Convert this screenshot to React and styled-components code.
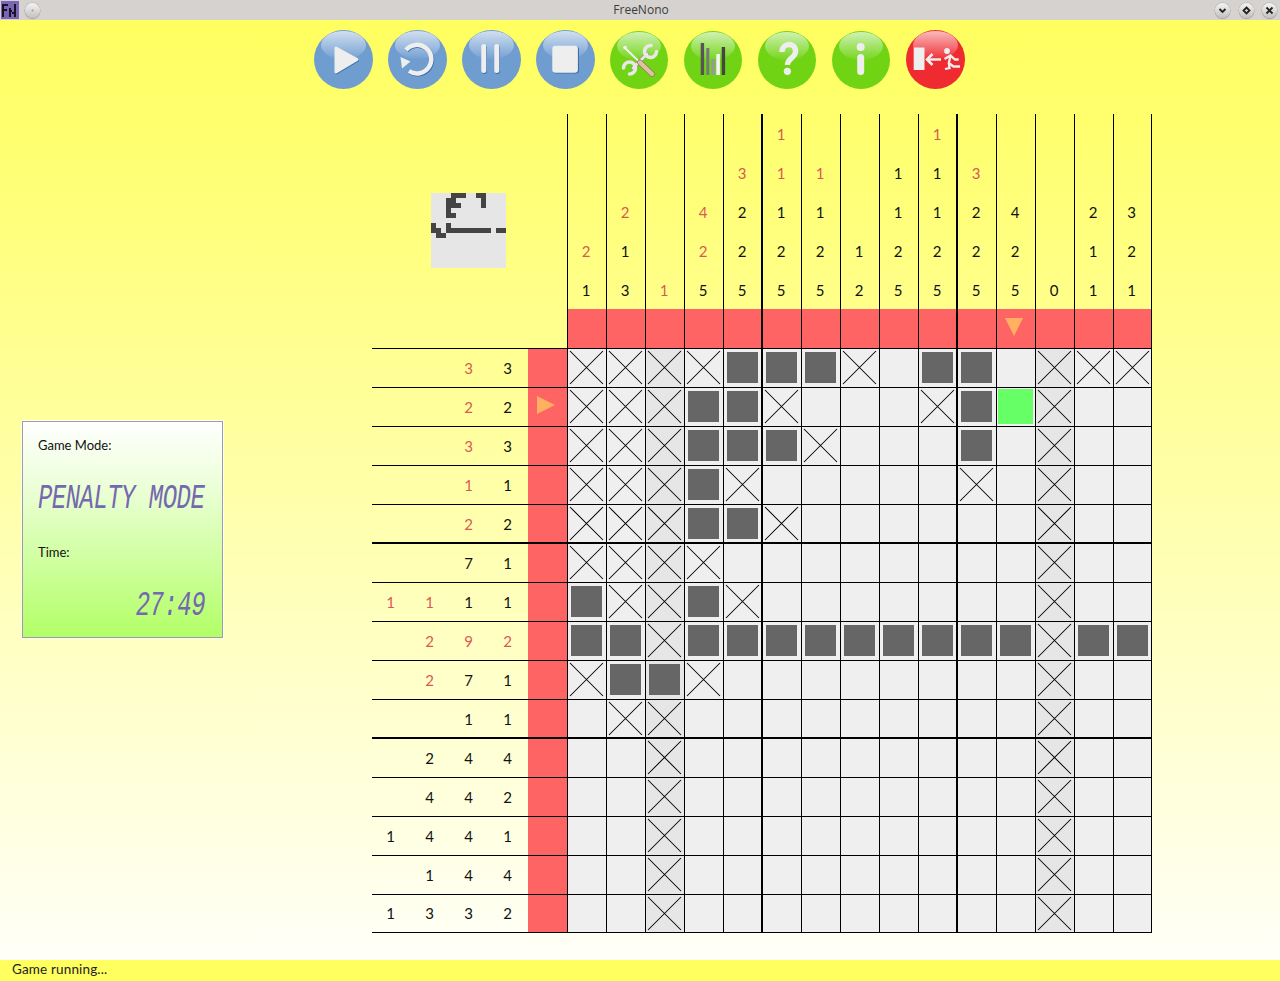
import React from 'react';
import styled, { createGlobalStyle } from 'styled-components';

const Global = createGlobalStyle`
  html, body { margin: 0; padding: 0; height: 100%; }
  #root { height: 100%; }
  body { font-family: Lato, "Open Sans", sans-serif; overflow: hidden; }
`;

const Win = styled.div`
  width: 1280px; height: 981px; display: flex; flex-direction: column;
`;
const TitleBar = styled.header`
  height: 20px; flex: none; background: #d6d2d0; display: flex; align-items: center;
  justify-content: space-between; position: relative; padding: 0 3px 0 1px;
`;
const TitleText = styled.div`
  position: absolute; left: 0; right: 0; top: 3px; text-align: center; padding-left: 2px;
  font: 12px/14px "Open Sans", sans-serif; color: #3c3c3c;
`;
const TitleGroup = styled.div`
  display: flex; align-items: center; gap: ${p => p.$gap}px;
`;
const RoundBtn = styled.span`
  width: 15px; height: 15px; border-radius: 50%; display: flex; align-items: center; justify-content: center;
  background: linear-gradient(#f4f4f4, #c4c0be); box-shadow: 0 0 0 .5px #aaa6a4, 0 1px 1px #a8a4a2;
`;
const Main = styled.main`
  flex: 1; min-height: 0; display: flex; flex-direction: column;
  background: linear-gradient(#ffff60 0%, #ffff7a 20%, #fffff8 100%);
`;
const Toolbar = styled.nav`
  display: flex; justify-content: center; gap: 15px; padding: 10px 1px 0 0; height: 84px; box-sizing: border-box; flex: none;
`;
const Orb = styled.button`
  width: ${p => p.$small ? 58 : 59}px; height: ${p => p.$small ? 58 : 59}px;
  margin: ${p => p.$small ? '1px 1px 0 0' : '0'};
  padding: 0; border: 0; border-radius: 50%; position: relative; overflow: hidden;
  background: ${p => p.$color}; display: block;
  &::before {
    content: ""; position: absolute; left: 7px; right: 7px; top: 1px; height: 28px; border-radius: 50%;
    background: linear-gradient(rgba(255,255,255,.68), rgba(255,255,255,.04));
  }
  svg { position: absolute; left: 0; top: ${p => p.$small ? -1 : 0}px; }
`;
const Content = styled.div`
  flex: 1; display: flex; align-items: flex-start; padding-top: 10px;
`;
const Side = styled.aside`
  width: 372px; flex: none; padding: 307px 0 0 22px; box-sizing: border-box;
`;
const Panel = styled.section`
  width: 201px; height: 217px; box-sizing: border-box; border: 1px solid #9c9cac; padding: 14px 15px 0 15px;
  outline: 1px solid #fffff0;
  background: linear-gradient(#ffffff 0%, #ecffd8 30%, #b2ff66 100%);
  display: flex; flex-direction: column; overflow: hidden;
`;
const PanelLabel = styled.div`
  font: 13px/18px Lato, sans-serif; color: #111;
  margin-top: ${p => p.$top || 0}px;
`;
const Lcd = styled.div`
  font: italic 24px/28px "Liberation Mono", monospace; color: #7468b0; white-space: pre;
  text-align: ${p => p.$align}; transform: scaleY(1.45); transform-origin: 50% 50%;
  margin-top: ${p => p.$top}px; letter-spacing: -.55px; padding-right: 2px;
`;
const Board = styled.div`
  display: grid; grid-template-columns: repeat(20, 39px); grid-template-rows: repeat(21, 39px);
  width: 780px;
`;
const Blank = styled.div`
  grid-column: span 5;
`;
const Line = styled.div`
  box-sizing: border-box; display: flex; align-items: center; justify-content: center;
  ${p => p.$left ? 'border-left: 1px solid #000;' : ''}
  ${p => p.$top ? 'border-top: 1px solid #000;' : ''}
  ${p => p.$end ? 'border-right: 1px solid #000;' : ''}
  ${p => p.$bottom ? 'border-bottom: 1px solid #000;' : ''}
  ${p => {
    const s = [];
    if (p.$thickL) s.push('-1px 0 0 #000');
    if (p.$thickT) s.push('0 -1px 0 #000');
    return s.length ? `box-shadow: ${s.join(',')}; position: relative;` : '';
  }}
`;
const Clue = styled(Line)`
  font: 15px/1 Lato, sans-serif; color: ${p => p.$solved ? '#d85a55' : '#111'}; padding-right: 2px;
  padding-top: ${p => p.$left ? 2 : 0}px;
`;
const Marker = styled(Line)`background: #ff6464;`;
const Arrow = styled.svg`
  width: 18px; height: 18px; display: block; flex: none; margin: ${p => p.$margin};
`;
const Cell = styled(Line)`
  background: ${p => p.$zero ? '#e6e6e6' : '#efefef'};
  align-items: flex-start; justify-content: flex-start;
`;
const Fill = styled.div`
  width: 31px; height: 31px; margin: 3px; background: #666;
`;
const Cursor = styled.div`
  width: 35px; height: 35px; margin: 1px; background: #66ff66;
`;
const CrossSvg = styled.svg`
  width: 37px; height: 37px; display: block; margin: 0;
`;
const Thumb = styled.svg`
  position: absolute; left: 59px; top: 79px; width: 75px; height: 75px; display: block;
`;
const BoardWrap = styled.div`
  position: relative; width: 780px;
`;
const Status = styled.footer`
  height: 21px; flex: none; background: #ffff60; font: 13.5px/19px Lato, sans-serif;
  color: #222; padding-left: 12px; letter-spacing: .15px;
`;

const Cross = () => (
  <CrossSvg viewBox="0 0 37 37">
    <path d="M2 2L35 35M35 2L2 35" stroke="#000" strokeWidth="1.05" fill="none" />
  </CrossSvg>
);

const grid = [
  'XXXXFFFX.FF.XXX',
  'XXXFFX...XFGX..',
  'XXXFFFX...F.X..',
  'XXXFX.....X.X..',
  'XXXFFX......X..',
  'XXXX........X..',
  'FXXFX.......X..',
  'FFXFFFFFFFFFXFF',
  'XFFX........X..',
  '.XX.........X..',
  '..X.........X..',
  '..X.........X..',
  '..X.........X..',
  '..X.........X..',
  '..X.........X..',
];
const topClues = [
  ['', '', '', '2r', '1'],
  ['', '', '2r', '1', '3'],
  ['', '', '', '', '1r'],
  ['', '', '4r', '2r', '5'],
  ['', '3r', '2', '2', '5'],
  ['1r', '1r', '1', '2', '5'],
  ['', '1r', '1', '2', '5'],
  ['', '', '', '1', '2'],
  ['', '1', '1', '2', '5'],
  ['1r', '1', '1', '2', '5'],
  ['', '3r', '2', '2', '5'],
  ['', '', '4', '2', '5'],
  ['', '', '', '', '0'],
  ['', '', '2', '1', '1'],
  ['', '', '3', '2', '1'],
];
const rowClues = [
  ['', '', '3r', '3'], ['', '', '2r', '2'], ['', '', '3r', '3'], ['', '', '1r', '1'], ['', '', '2r', '2'],
  ['', '', '7', '1'], ['1r', '1r', '1', '1'], ['', '2r', '9r', '2r'], ['', '2r', '7', '1'], ['', '', '1', '1'],
  ['', '2', '4', '4'], ['', '4', '4', '2'], ['1', '4', '4', '1'], ['', '1', '4', '4'], ['1', '3', '3', '2'],
];
const ZERO = [2, 12];
const thickC = c => c === 5 || c === 10;
const thickR = r => r === 5 || r === 10;

const ClueText = ({ v, ...rest }) => (
  <Clue $solved={v.endsWith('r')} {...rest}>{v.replace('r', '')}</Clue>
);

function BoardCells() {
  const out = [];
  for (let y = 0; y < 5; y++) {
    out.push(<Blank key={`b${y}`} />);
    for (let c = 0; c < 15; c++) {
      out.push(<ClueText key={`t${y}-${c}`} v={topClues[c][y]} $left $thickL={thickC(c)} $end={c === 14} />);
    }
  }
  out.push(<Blank key="mb" />);
  for (let c = 0; c < 15; c++) {
    out.push(
      <Marker key={`mc${c}`} $left $thickL={thickC(c)} $end={c === 14}>
        {c === 11 && (
          <Arrow $margin="0 4px 3px 0" viewBox="0 0 18 18"><path d="M0 0H18L9 18Z" fill="#ffb060" /></Arrow>
        )}
      </Marker>
    );
  }
  for (let r = 0; r < 15; r++) {
    const last = r === 14;
    for (let i = 0; i < 4; i++) {
      out.push(<ClueText key={`r${r}-${i}`} v={rowClues[r][i]} $top $thickT={thickR(r)} $bottom={last} />);
    }
    out.push(
      <Marker key={`mr${r}`} $top $thickT={thickR(r)} $bottom={last}>
        {r === 1 && (
          <Arrow $margin="0 3px 4px 0" viewBox="0 0 18 18"><path d="M0 0L18 9L0 18Z" fill="#ffb060" /></Arrow>
        )}
      </Marker>
    );
    for (let c = 0; c < 15; c++) {
      const k = grid[r][c];
      out.push(
        <Cell key={`c${r}-${c}`} $left $top $zero={ZERO.includes(c)} $thickL={thickC(c)} $thickT={thickR(r)} $end={c === 14} $bottom={last}>
          {k === 'X' && <Cross />}
          {k === 'F' && <Fill />}
          {k === 'G' && <Cursor />}
        </Cell>
      );
    }
  }
  return out;
}

const Shade = ({ children }) => <svg width="59" height="59" viewBox="0 0 59 59">{children}</svg>;

const Tools = () => (
  <Shade>
    <g fill="none" strokeLinecap="round">
      <path d="M23 38L37 24" stroke="#8a8f86" strokeWidth="4" />
      <path d="M23 38L37 24" stroke="#e6e6e6" strokeWidth="2.8" />
      <path d="M41 15.5A6 6 0 1 0 46.5 21.5" stroke="#e8e8e8" strokeWidth="3.6" />
      <path d="M13.5 38A6 6 0 1 1 19.5 44" stroke="#e8e8e8" strokeWidth="3.6" />
      <path d="M15 18L29 31.5" stroke="#f2f2f2" strokeWidth="1.8" />
      <circle cx="15" cy="17.5" r="1.8" fill="#f2f2f2" />
      <path d="M30 32.5L42 44" stroke="#8d7458" strokeWidth="5.6" />
      <path d="M30 32.5L42 44" stroke="#dfc2a4" strokeWidth="4.4" />
    </g>
  </Shade>
);

const Exit = () => (
  <Shade>
    <rect x="7.7" y="17.5" width="10.8" height="22.5" fill="#eee" />
    <path d="M35 29.5H22" stroke="#eee" strokeWidth="2.6" fill="none" />
    <path d="M26.5 24L21 29.5L26.5 35" stroke="#eee" strokeWidth="2.6" fill="none" />
    <circle cx="41" cy="21" r="2.9" fill="#eee" />
    <path d="M38.5 29L44.5 25.5L49 29.5H52.7M44.5 25.5L42.8 33L47.5 36.5H54M42.8 33L43.5 38L39 39" stroke="#eee" strokeWidth="2.3" fill="none" />
  </Shade>
);

const BLUE = '#709dd0';
const GREEN = '#70d414';
const buttons = [
  { color: BLUE, icon: (
    <Shade>
      <path d="M22 18L43 29.5L22 42Z" fill="#3c6ea8" stroke="#3c6ea8" strokeWidth="3" strokeLinejoin="round" transform="translate(.6 .8)" />
      <path d="M22 18L43 29.5L22 42Z" fill="#eee" stroke="#eee" strokeWidth="3" strokeLinejoin="round" />
    </Shade>
  ) },
  { color: BLUE, icon: (
    <Shade>
      <path d="M18 20A14.3 14.3 0 1 1 21 41" fill="none" stroke="#3c6ea8" strokeWidth="4.5" transform="translate(.7 .8)" />
      <path d="M18 20A14.3 14.3 0 1 1 21 41" fill="none" stroke="#eee" strokeWidth="4.5" />
      <path d="M12.5 27L22.5 31.5L14 38.5Z" fill="#eee" />
    </Shade>
  ) },
  { color: BLUE, icon: (
    <Shade>
      <rect x="20" y="15" width="5" height="29" rx="2.5" fill="#3c6ea8" />
      <rect x="33" y="15" width="5" height="29" rx="2.5" fill="#3c6ea8" />
      <rect x="19.3" y="14" width="5" height="29" rx="2.5" fill="#eee" />
      <rect x="32.3" y="14" width="5" height="29" rx="2.5" fill="#eee" />
    </Shade>
  ) },
  { color: BLUE, icon: (
    <Shade>
      <rect x="17" y="16.5" width="26" height="27" rx="3" fill="#3c6ea8" />
      <rect x="16.3" y="15.7" width="25.6" height="27" rx="3" fill="#eee" />
    </Shade>
  ) },
  { color: GREEN, small: true, icon: <Tools /> },
  { color: GREEN, small: true, icon: (
    <Shade>
      <rect x="16.7" y="13" width="3.4" height="32" fill="#555" />
      <rect x="22.3" y="18" width="3" height="27" fill="#777" />
      <rect x="27.3" y="29" width="3.6" height="16" fill="#999" />
      <rect x="32.3" y="24" width="3.6" height="21" fill="#f4f4f4" />
      <rect x="37.7" y="17" width="3.4" height="28" fill="#444" />
    </Shade>
  ) },
  { color: GREEN, small: true, icon: (
    <Shade>
      <path d="M24 22C24 12 38.5 12 37.5 22C37 28 29.5 28 29.5 35" fill="none" stroke="#eee" strokeWidth="5.4" />
      <circle cx="29.4" cy="41.3" r="3.6" fill="#eee" />
    </Shade>
  ) },
  { color: GREEN, small: true, icon: (
    <Shade>
      <circle cx="28.7" cy="17" r="4" fill="#eee" />
      <rect x="25.2" y="24" width="7" height="21" rx="3.5" fill="#eee" />
    </Shade>
  ) },
  { color: '#ef2a30', icon: <Exit /> },
];

const Logo = () => (
  <svg width="18" height="18" viewBox="0 0 18 18" shapeRendering="crispEdges">
    <rect width="18" height="18" fill="#7a66b4" />
    <path d="M1 3H7V5H3V8H6V10H3V16H1ZM8 7H10V9H11V11H13V3H15V16H13V13H11V11H10V16H8Z" fill="#17142a" />
  </svg>
);

const Chevron = ({ d }) => (
  <svg width="9" height="9" viewBox="0 0 9 9"><path d={d} fill="none" stroke="#222" strokeWidth="1.8" /></svg>
);

export default function App() {
  const fills = [];
  grid.forEach((row, y) => [...row].forEach((k, x) => {
    if (k === 'F') fills.push(<rect key={`${x}-${y}`} x={x * 5} y={y * 5} width="5" height="5" fill="#444" />);
  }));
  return (
    <Win>
      <Global />
      <TitleBar>
        <TitleGroup $gap={6}>
          <Logo />
          <RoundBtn><svg width="3" height="3"><circle cx="1.5" cy="1.5" r="1" fill="#999" /></svg></RoundBtn>
        </TitleGroup>
        <TitleText>FreeNono</TitleText>
        <TitleGroup $gap={8.5}>
          <RoundBtn><Chevron d="M1.5 3L4.5 6L7.5 3" /></RoundBtn>
          <RoundBtn><Chevron d="M4.5 1.5L7.5 4.5L4.5 7.5L1.5 4.5Z" /></RoundBtn>
          <RoundBtn><Chevron d="M1.5 1.5L7.5 7.5M7.5 1.5L1.5 7.5" /></RoundBtn>
        </TitleGroup>
      </TitleBar>
      <Main>
        <Toolbar>
          {buttons.map((b, i) => <Orb key={i} $color={b.color} $small={b.small}>{b.icon}</Orb>)}
        </Toolbar>
        <Content>
          <Side>
            <Panel>
              <PanelLabel>Game Mode:</PanelLabel>
              <Lcd $align="left" $top={31}>PENALTY MODE</Lcd>
              <PanelLabel $top={30}>Time:</PanelLabel>
              <Lcd $align="right" $top={31}>27:49</Lcd>
            </Panel>
          </Side>
          <BoardWrap>
            <Board><BoardCells /></Board>
            <Thumb viewBox="0 0 75 75" shapeRendering="crispEdges">
              <rect width="75" height="75" fill="#e6e6e6" />
              {fills}
            </Thumb>
          </BoardWrap>
        </Content>
      </Main>
      <Status>Game running...</Status>
    </Win>
  );
}
